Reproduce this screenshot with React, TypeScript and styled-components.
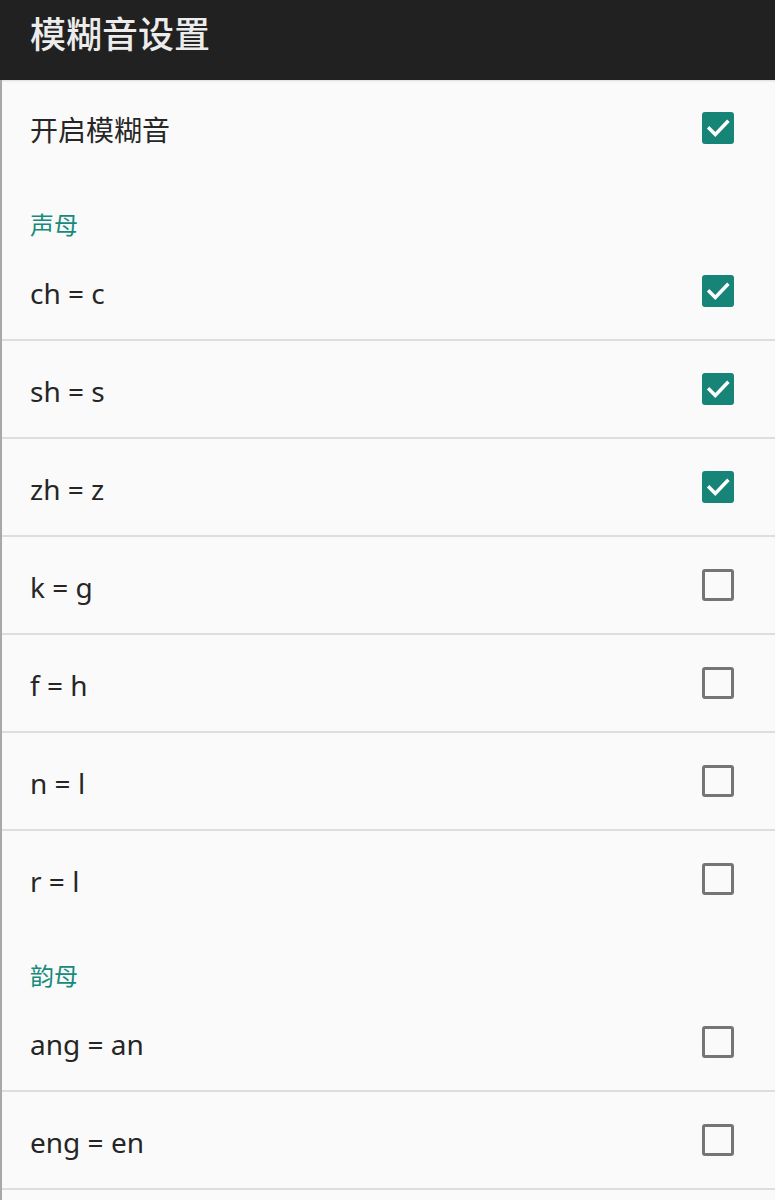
import React from "react";
import styled, { createGlobalStyle } from "styled-components";

const GlobalStyle = createGlobalStyle`
  html, body {
    margin: 0;
    padding: 0;
    background: #fafafa;
    font-family: "Noto Sans", "Noto Sans CJK SC", sans-serif;
  }
`;

type Item = { label: string; checked: boolean };

const initials: Item[] = [
  { label: "ch = c", checked: true },
  { label: "sh = s", checked: true },
  { label: "zh = z", checked: true },
  { label: "k = g", checked: false },
  { label: "f = h", checked: false },
  { label: "n = l", checked: false },
  { label: "r = l", checked: false },
];

const finals: Item[] = [
  { label: "ang = an", checked: false },
  { label: "eng = en", checked: false },
];

const App = () => {
  return (
    <>
      <GlobalStyle />
      <Page>
        <TopBar>
          <Title>模糊音设置</Title>
        </TopBar>
        <List>
          <Row>
            <Label>开启模糊音</Label>
            <CheckBox checked />
          </Row>
          <SectionTitle>声母</SectionTitle>
          {initials.map((it, i) => (
            <Row key={it.label} divider={i < initials.length - 1}>
              <Label>{it.label}</Label>
              <CheckBox checked={it.checked} />
            </Row>
          ))}
          <SectionTitle>韵母</SectionTitle>
          {finals.map((it) => (
            <Row key={it.label} divider>
              <Label>{it.label}</Label>
              <CheckBox checked={it.checked} />
            </Row>
          ))}
        </List>
      </Page>
    </>
  );
};

const CheckBox = ({ checked }: { checked?: boolean }) => (
  <Box checked={!!checked}>
    {checked && (
      <svg width="26" height="26" viewBox="0 0 24 24">
        <path
          d="M4 12.5 L9.5 18 L20.5 6.5"
          fill="none"
          stroke="#fff"
          strokeWidth="3.2"
          strokeLinecap="square"
        />
      </svg>
    )}
  </Box>
);

export default App;

const Page = styled.div`
  width: 775px;
  height: 1200px;
  overflow: hidden;
  display: flex;
  flex-direction: column;
`;

const TopBar = styled.div`
  flex-shrink: 0;
  height: 80px;
  background: #212121;
  display: flex;
  align-items: flex-start;
  padding: 9px 30px 0;
  box-sizing: border-box;
`;

const Title = styled.h1`
  margin: 0;
  font-size: 36px;
  line-height: 46px;
  font-weight: 500;
  color: #ececec;
  font-family: "Noto Sans CJK SC", sans-serif;
`;

const List = styled.div`
  flex: 1;
  background: #fafafa;
  border-left: 2px solid #a8a8a8;
  box-shadow: inset 0 2px 3px -2px rgba(0, 0, 0, 0.25);
`;

const Row = styled.div.withConfig({
  shouldForwardProp: (p) => p !== "divider",
})<{ divider?: boolean }>`
  flex-shrink: 0;
  height: 98px;
  box-sizing: border-box;
  display: flex;
  align-items: center;
  justify-content: space-between;
  padding: 0 41px 0 28px;
  border-bottom: 2px solid ${(p) => (p.divider ? "#dedede" : "transparent")};
`;

const Label = styled.span`
  font-size: 28px;
  line-height: 36px;
  color: #262626;
  font-family: "Noto Sans", "Noto Sans CJK SC", sans-serif;
  padding-top: 4px;
`;

const SectionTitle = styled.div`
  height: 65px;
  box-sizing: border-box;
  padding: 31px 28px 0;
  font-size: 24px;
  line-height: 30px;
  color: #168a7c;
  font-family: "Noto Sans CJK SC", sans-serif;
`;

const Box = styled.div.withConfig({
  shouldForwardProp: (p) => p !== "checked",
})<{ checked: boolean }>`
  width: 32px;
  height: 32px;
  box-sizing: border-box;
  border-radius: 3px;
  display: flex;
  align-items: center;
  justify-content: center;
  background: ${(p) => (p.checked ? "#168577" : "transparent")};
  border: ${(p) => (p.checked ? "none" : "3px solid #757575")};
`;
